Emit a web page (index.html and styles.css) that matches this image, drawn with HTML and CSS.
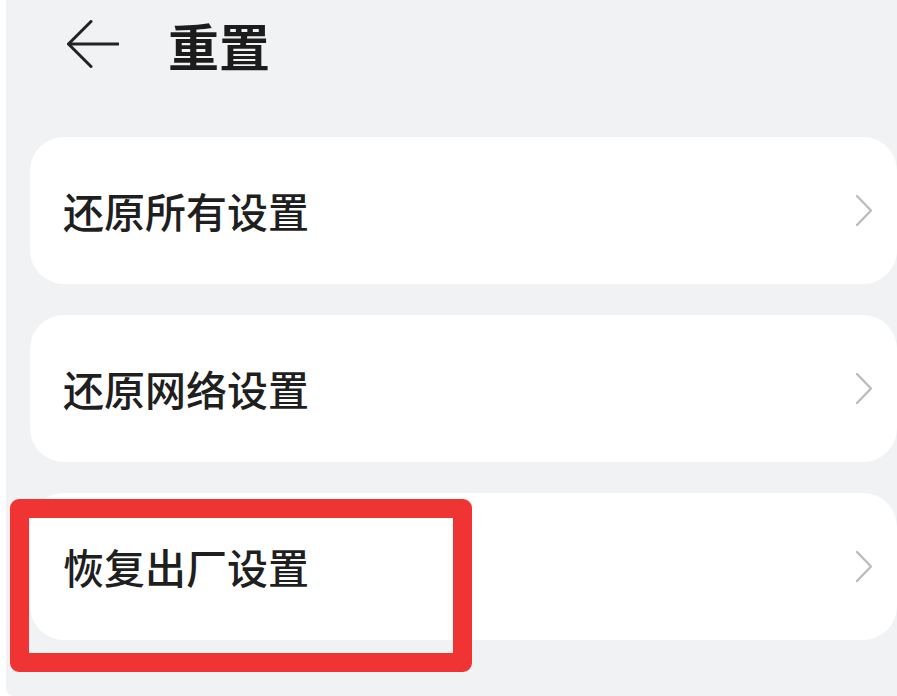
FILE: index.html
```html
<!DOCTYPE html>
<html>
<head>
    <meta charset="UTF-8">
    <title>重置</title>
    <link rel="stylesheet" href="styles.css">
</head>
<body>
    <div class="screen">
        <div class="header">
            <svg class="back" width="52" height="48" viewBox="0 0 52 48">
                <polyline points="24,1.5 1.5,24 24,46.5" fill="none" stroke="#222" stroke-width="3" stroke-linecap="round" stroke-linejoin="round"/>
                <line x1="2" y1="24" x2="51" y2="24" stroke="#222" stroke-width="3" stroke-linecap="round"/>
            </svg>
            <h1 class="title">重置</h1>
        </div>

        <div class="list">
            <div class="item">
                <span class="label">还原所有设置</span>
                <svg class="chevron" width="18" height="33" viewBox="0 0 18 33">
                    <polyline points="2,2 16,16.5 2,31" fill="none" stroke="#bcbcbc" stroke-width="2.4" stroke-linecap="round" stroke-linejoin="round"/>
                </svg>
            </div>
            <div class="item">
                <span class="label">还原网络设置</span>
                <svg class="chevron" width="18" height="33" viewBox="0 0 18 33">
                    <polyline points="2,2 16,16.5 2,31" fill="none" stroke="#bcbcbc" stroke-width="2.4" stroke-linecap="round" stroke-linejoin="round"/>
                </svg>
            </div>
            <div class="item item-marked">
                <span class="label">恢复出厂设置</span>
                <svg class="chevron" width="18" height="33" viewBox="0 0 18 33">
                    <polyline points="2,2 16,16.5 2,31" fill="none" stroke="#bcbcbc" stroke-width="2.4" stroke-linecap="round" stroke-linejoin="round"/>
                </svg>
                <div class="highlight"></div>
            </div>
        </div>
    </div>
</body>
</html>
```

FILE: styles.css
```css
body {
    margin: 0;
    background-color: #fff;
    font-family: "Noto Sans CJK SC", "Noto Sans", sans-serif;
    overflow: hidden;
}

.screen {
    margin-left: 6px;
    height: 696px;
    background-color: #f1f2f4;
    border-bottom-left-radius: 8px;
}

.header {
    display: flex;
    align-items: center;
    height: 90px;
    padding-left: 61px;
}

.back {
    display: block;
    margin-top: -2px;
}

.title {
    margin: 0 0 0 49px;
    font-size: 51px;
    font-weight: 600;
    color: #1c1c1c;
    line-height: 1;
}

.list {
    display: flex;
    flex-direction: column;
    gap: 31px;
    padding: 47px 0 0 24px;
}

.item {
    position: relative;
    display: flex;
    align-items: center;
    justify-content: space-between;
    height: 147px;
    padding: 0 24px 0 33px;
    background-color: #fff;
    border-radius: 34px;
}

.label {
    font-size: 41px;
    font-weight: 500;
    color: #1f1f1f;
    line-height: 1;
}

.chevron {
    display: block;
}

.highlight {
    position: absolute;
    left: -20px;
    top: 6px;
    width: 424px;
    height: 135px;
    border: 19px solid #f03434;
    border-radius: 9px;
}
```
